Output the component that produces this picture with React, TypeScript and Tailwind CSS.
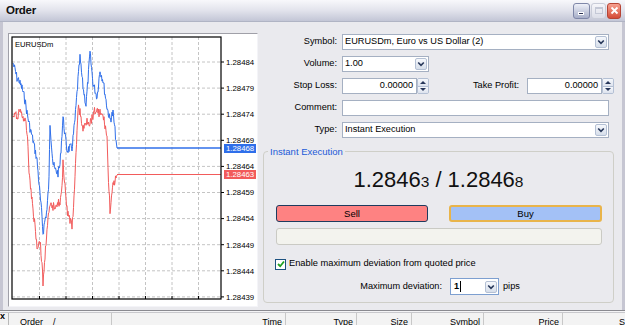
import React from 'react';

type P = [number, number];

const BLUE_KP: P[] = [
  [13, 63], [15, 70], [17, 78], [19, 80], [20, 84], [22, 88], [23, 92], [25, 100], [27, 113], [30, 128],
  [33, 140], [35, 150], [37, 160], [40, 195], [42, 217], [43, 233], [45, 220], [47, 210], [49, 180],
  [50, 123], [52, 150], [53, 163], [55, 170], [58, 173], [60, 165], [63, 117], [65, 135], [67, 150],
  [70, 148], [72, 148], [75, 120], [78, 80], [80, 58], [83, 87], [86, 105], [88, 80], [90, 53], [93, 83],
  [95, 90], [97, 97], [100, 70], [103, 80], [107, 107], [110, 120], [113, 113], [116, 140], [117, 148],
];

const RED_KP: P[] = [
  [13, 117], [15, 115], [17, 117], [20, 110], [23, 117], [25, 122], [27, 130], [28, 147], [29, 170],
  [31, 190], [33, 210], [35, 225], [37, 247], [40, 240], [42, 265], [43, 283], [45, 257], [47, 227],
  [50, 207], [53, 207], [57, 203], [60, 203], [62, 190], [63, 163], [65, 185], [67, 210], [70, 220],
  [72, 227], [74, 200], [75, 180], [77, 130], [78, 107], [80, 113], [83, 130], [85, 125], [87, 120],
  [90, 123], [93, 115], [95, 110], [100, 113], [103, 117], [105, 125], [107, 137], [108, 170],
  [110, 210], [112, 195], [113, 187], [116, 178], [117, 175],
];

const OX = 9;
const OY = 34;

function makeSeries(kp: P[], seed: number, amp: number): string {
  let s = seed;
  const rnd = () => {
    s = (s * 9301 + 49297) % 233280;
    return s / 233280 - 0.5;
  };
  const pts: string[] = [];
  const first = kp[0][0];
  const last = kp[kp.length - 1][0];
  for (let x = first; x <= last; x += 0.5) {
    let i = 0;
    while (i < kp.length - 2 && kp[i + 1][0] < x) i++;
    const [x0, y0] = kp[i];
    const [x1, y1] = kp[i + 1];
    const t = x1 === x0 ? 0 : (x - x0) / (x1 - x0);
    let y = y0 + (y1 - y0) * t;
    if (x > first && x < last - 1) y += rnd() * amp;
    pts.push(`${(x - OX).toFixed(1)},${(y - OY).toFixed(1)}`);
  }
  return pts.join(' ');
}

const LABELS = ['1.28484', '1.28479', '1.28474', '1.28469', '1.28464', '1.28459', '1.28454', '1.28449', '1.28444', '1.28439'];
const VGRID = [39.5, 66, 92.5, 119, 145.5, 172, 198.5];

function Chart() {
  const blue = makeSeries(BLUE_KP, 7, 9);
  const red = makeSeries(RED_KP, 31, 9);
  const fl = 12 - OX;
  const fr = 221 - OX;
  const ft = 37 - OY;
  const fb = 299 - OY;
  return (
    <svg width="248" height="272" viewBox="0 0 248 272" className="block">
      <rect x="0" y="0" width="248" height="272" fill="#ffffff" />
      {VGRID.map((x) => (
        <line key={'v' + x} x1={x - OX} y1={ft} x2={x - OX} y2={fb} stroke="#c4c4c4" strokeWidth="1" strokeDasharray="3 2" />
      ))}
      {LABELS.map((l, k) => {
        const y = 62 + 26.1 * k - OY;
        return (
          <g key={l}>
            <line x1={fl} y1={y} x2={fr} y2={y} stroke="#c4c4c4" strokeWidth="1" strokeDasharray="3 2" />
            <line x1={fr} y1={y} x2={fr + 3} y2={y} stroke="#000" strokeWidth="1" />
            <text x={226 - OX} y={y + 2.8} fontSize="7.8" fontFamily="'Liberation Sans', Arial, sans-serif" fill="#000">
              {l}
            </text>
          </g>
        );
      })}
      {VGRID.map((x) => (
        <line key={'t' + x} x1={x - OX} y1={fb - 3} x2={x - OX} y2={fb} stroke="#000" strokeWidth="1" />
      ))}
      <polyline points={red} fill="none" stroke="#f25b5b" strokeWidth="1" />
      <polyline points={blue} fill="none" stroke="#2f6fea" strokeWidth="1" />
      <line x1={117 - OX} y1={174.5 - OY} x2={fr} y2={174.5 - OY} stroke="#f25b5b" strokeWidth="1" />
      <line x1={117 - OX} y1={148 - OY} x2={fr} y2={148 - OY} stroke="#2f6fea" strokeWidth="1.3" />
      <rect x={fl} y={ft} width={fr - fl} height={fb - ft} fill="none" stroke="#000" strokeWidth="1.2" />
      <rect x={224 - OX} y={144 - OY} width="32" height="9" fill="#2f6fea" />
      <text x={226 - OX} y={151.2 - OY} fontSize="7.8" fontFamily="'Liberation Sans', Arial, sans-serif" fill="#fff">
        1.28468
      </text>
      <rect x={224 - OX} y={170 - OY} width="32" height="9" fill="#f25b5b" />
      <text x={226 - OX} y={177.2 - OY} fontSize="7.8" fontFamily="'Liberation Sans', Arial, sans-serif" fill="#fff">
        1.28463
      </text>
      <text x={15 - OX} y={47 - OY} fontSize="7.6" fontFamily="'Liberation Sans', Arial, sans-serif" fill="#000">
        EURUSDm
      </text>
    </svg>
  );
}

function Chevron() {
  return (
    <svg width="8" height="6" viewBox="0 0 8 6">
      <path d="M1.2 1.5 L4 4.3 L6.8 1.5" fill="none" stroke="#27375a" strokeWidth="1.6" />
    </svg>
  );
}

function DropBtn() {
  return (
    <div className="w-[12px] h-[12px] flex items-center justify-center rounded-[2px] border border-[#b4c0d4] bg-linear-to-b from-[#f6f8fc] to-[#d6deea]">
      <Chevron />
    </div>
  );
}

function Spinner() {
  return (
    <div className="w-[12px] h-[16px] flex flex-col rounded-[2px] border border-[#b4c0d4] overflow-hidden">
      <div className="flex-1 flex items-center justify-center bg-linear-to-b from-[#f6f8fc] to-[#dde3ee] border-b border-[#b4c0d4]">
        <svg width="6" height="3" viewBox="0 0 6 3">
          <path d="M0 3 L3 0 L6 3Z" fill="#27375a" />
        </svg>
      </div>
      <div className="flex-1 flex items-center justify-center bg-linear-to-b from-[#f6f8fc] to-[#dde3ee]">
        <svg width="6" height="3" viewBox="0 0 6 3">
          <path d="M0 0 L3 3 L6 0Z" fill="#27375a" />
        </svg>
      </div>
    </div>
  );
}

function Label({ children, w = 79 }: { children: React.ReactNode; w?: number }) {
  return (
    <div className={w === 79 ? 'w-[79px] text-right' : 'w-[86px] text-right'}>{children}</div>
  );
}

function SelectBox({ text, wide }: { text: string; wide?: boolean }) {
  return (
    <div className={(wide ? 'w-[267px]' : 'w-[87px]') + ' h-[16px] flex items-center bg-white border border-[#a5b0c2] pl-[2px] pr-[1px]'}>
      <span className="flex-1 truncate">{text}</span>
      <DropBtn />
    </div>
  );
}

function NumBox() {
  return (
    <div className="w-[87px] h-[16px] flex items-stretch">
      <div className="flex-1 bg-white border border-[#a5b0c2] flex items-center justify-end pr-[3px]">0.00000</div>
      <Spinner />
    </div>
  );
}

export default function App() {
  return (
    <div className="w-[625px] h-[325px] overflow-hidden flex flex-col bg-[#eaeaee] font-['Liberation_Sans',Arial,sans-serif] text-black text-[9.2px] leading-none">
      {/* Title bar */}
      <div className="h-[22px] shrink-0 flex items-center justify-between pl-[6px] pr-[4px] bg-linear-to-b from-[#f8f8fb] via-[#e2e3ec] to-[#c3c6d6] border-b border-[#b0b4c4]">
        <span className="text-[11.5px] font-bold tracking-[-0.3px] text-[#111]">Order</span>
        <div className="flex items-center gap-[1px]">
          <div className="w-[17px] h-[16px] rounded-[3px] border border-[#7f87a8] bg-linear-to-b from-[#eef0f8] to-[#a7aec8] flex items-end pl-[4px] pb-[3px]">
            <div className="w-[6px] h-[3px] bg-[#2a3152] border border-white" />
          </div>
          <div className="w-[15px] h-[16px] rounded-[3px] border border-[#c9ccd8] bg-linear-to-b from-[#f6f6fa] to-[#dcdee8] flex items-center justify-center">
            <div className="w-[8px] h-[7px] border border-[#c4c8d6] border-t-2" />
          </div>
          <div className="w-[14px] h-[16px] rounded-[3px] border border-[#b64434] bg-linear-to-b from-[#f6a090] to-[#d44a36] flex items-center justify-center">
            <svg width="9" height="9" viewBox="0 0 9 9">
              <path d="M1.5 1.5 L7.5 7.5 M7.5 1.5 L1.5 7.5" stroke="#fff" strokeWidth="1.8" />
            </svg>
          </div>
        </div>
      </div>

      {/* Body */}
      <div className="h-[288px] shrink-0 flex border-x-[3px] border-[#c6c6d2]">
        {/* Chart panel */}
        <div className="ml-[5px] mt-[11px] w-[250px] h-[274px] border border-t-[#a0a0a8] border-l-[#a0a0a8] border-b-[#f4f4f8] border-r-[#f4f4f8] bg-white">
          <Chart />
        </div>

        {/* Right pane */}
        <div className="flex-1 flex flex-col pt-[12px]">
          <div className="flex flex-col gap-[6px]">
            <div className="h-[16px] flex items-center gap-[5px]">
              <Label>Symbol:</Label>
              <SelectBox text="EURUSDm, Euro vs US Dollar (2)" wide />
            </div>
            <div className="h-[16px] flex items-center gap-[5px]">
              <Label>Volume:</Label>
              <SelectBox text="1.00" />
            </div>
            <div className="h-[16px] flex items-center gap-[5px]">
              <Label>Stop Loss:</Label>
              <NumBox />
              <div className="w-[86px] text-right pr-[1px]">Take Profit:</div>
              <div className="ml-[2px]">
                <NumBox />
              </div>
            </div>
            <div className="h-[16px] flex items-center gap-[5px]">
              <Label>Comment:</Label>
              <div className="w-[267px] h-[16px] bg-white border border-[#a5b0c2]" />
            </div>
            <div className="h-[16px] flex items-center gap-[5px]">
              <Label>Type:</Label>
              <SelectBox text="Instant Execution" wide />
            </div>
          </div>

          {/* Group box */}
          <div className="relative ml-[5px] mt-[13px] w-[351px] h-[152px] border border-[#cfcfc8] rounded-[4px]">
            <div className="absolute -top-[5px] left-[4px] px-[2px] bg-[#eaeaee] text-[#1c5ad8] text-[9.5px]">Instant Execution</div>
            <div className="flex flex-col">
              <div className="mt-[15px] h-[26px] flex items-center justify-center">
                <div className="flex items-baseline text-[22px] text-[#111]">
                  <span>1.2846</span>
                  <span className="text-[15.5px]">3</span>
                  <span className="mx-[6px]">/</span>
                  <span>1.2846</span>
                  <span className="text-[15.5px]">8</span>
                </div>
              </div>
              <div className="mt-[12px] ml-[12px] flex gap-[21px]">
                <div className="w-[152px] h-[17px] rounded-[3px] border border-[#1f3b5e] bg-[#fe8282] flex items-center justify-center text-[9.5px]">Sell</div>
                <div className="w-[153px] h-[17px] rounded-[3px] border-2 border-[#e9b44a] bg-[#a3c1f6] flex items-center justify-center text-[9.5px]">Buy</div>
              </div>
              <div className="mt-[6px] ml-[12px] w-[326px] h-[17px] rounded-[3px] border border-[#cacac4] bg-[#f3f3ee]" />
              <div className="mt-[13px] ml-[11px] h-[12px] flex items-center gap-[3px]">
                <div className="w-[11px] h-[11px] border border-[#1c5180] bg-white flex items-center justify-center">
                  <svg width="8" height="8" viewBox="0 0 8 8">
                    <path d="M1 4 L3.2 6.2 L7 1.5" fill="none" stroke="#21a121" strokeWidth="1.8" />
                  </svg>
                </div>
                <span className="text-[9.3px]">Enable maximum deviation from quoted price</span>
              </div>
              <div className="mt-[8px] h-[17px] flex items-center">
                <div className="w-[178px] text-right">Maximum deviation:</div>
                <div className="ml-[8px] w-[49px] h-[17px] flex items-center bg-white border border-[#7d9fd0] pl-[3px] pr-[1px]">
                  <span className="font-bold">1</span>
                  <span className="w-[1px] h-[11px] bg-black ml-[0.5px]" />
                  <span className="flex-1" />
                  <DropBtn />
                </div>
                <span className="ml-[4px]">pips</span>
              </div>
            </div>
          </div>
        </div>
      </div>

      {/* separator */}
      <div className="h-[3px] shrink-0 border-t border-[#8a8a90] bg-[#f4f4f6] border-b border-b-[#c8c8cc]" />

      {/* bottom strip */}
      <div className="h-[12px] shrink-0 flex bg-[#f3f3f3] text-[9px] overflow-hidden">
        <div className="w-[9px] font-bold pl-[0px] -mt-[1px] border-r border-[#b8b8b8]">x</div>
        <div className="w-[103px] flex pt-[5px] pl-[11px] border-r border-[#c8c8c8]">
          <span>Order</span>
          <span className="ml-[10px]">/</span>
        </div>
        <div className="w-[174px] text-right pt-[5px] pr-[3px] border-r border-[#c8c8c8]">Time</div>
        <div className="w-[71px] text-right pt-[5px] pr-[3px] border-r border-[#c8c8c8]">Type</div>
        <div className="w-[55px] text-right pt-[5px] pr-[3px] border-r border-[#c8c8c8]">Size</div>
        <div className="w-[72px] text-right pt-[5px] pr-[3px] border-r border-[#c8c8c8]">Symbol</div>
        <div className="w-[79px] text-right pt-[5px] pr-[3px] border-r border-[#c8c8c8]">Price</div>
        <div className="flex-1 text-right pt-[5px] pr-[0px]">S</div>
      </div>
    </div>
  );
}
